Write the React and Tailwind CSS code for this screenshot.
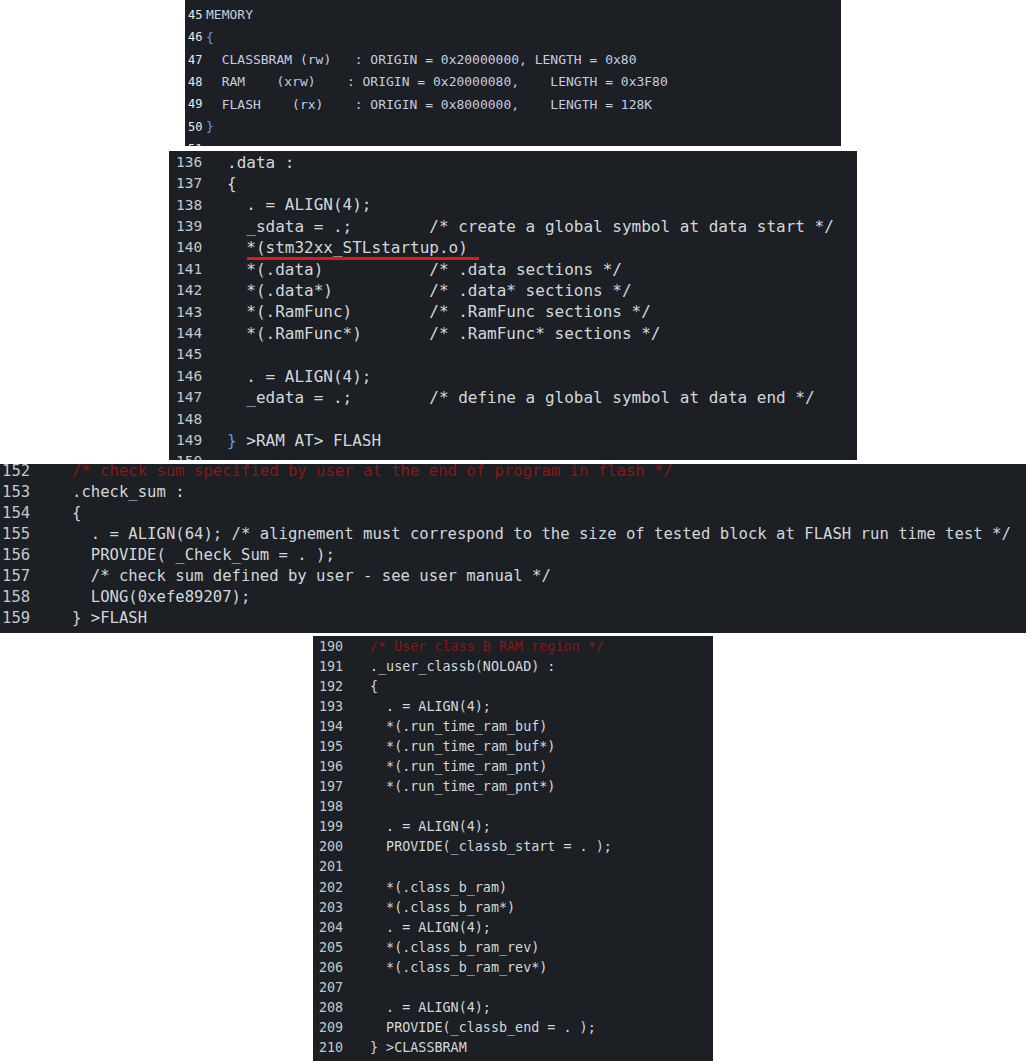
import React from "react";

const RED = "text-[#861a1a]";

// each line: [number, text, kind]  kind: "c" = red comment, "b" = blue brace
const memory = [
  ["45", "MEMORY"],
  ["46", "{", "b"],
  ["47", "  CLASSBRAM (rw)   : ORIGIN = 0x20000000, LENGTH = 0x80"],
  ["48", "  RAM    (xrw)    : ORIGIN = 0x20000080,    LENGTH = 0x3F80"],
  ["49", "  FLASH    (rx)    : ORIGIN = 0x8000000,    LENGTH = 128K"],
  ["50", "}", "b"],
  ["51", ""],
];

const dataSection = [
  ["135", "                                    /* copy of .data goes after code, typ */", "c"],
  ["136", ".data :"],
  ["137", "{"],
  ["138", "  . = ALIGN(4);"],
  ["139", "  _sdata = .;        /* create a global symbol at data start */"],
  ["140", "", "u"],
  ["141", "  *(.data)           /* .data sections */"],
  ["142", "  *(.data*)          /* .data* sections */"],
  ["143", "  *(.RamFunc)        /* .RamFunc sections */"],
  ["144", "  *(.RamFunc*)       /* .RamFunc* sections */"],
  ["145", ""],
  ["146", "  . = ALIGN(4);"],
  ["147", "  _edata = .;        /* define a global symbol at data end */"],
  ["148", ""],
  ["149", "} >RAM AT> FLASH", "rb"],
  ["150", ""],
];

const checkSum = [
  ["152", "/* check sum specified by user at the end of program in flash */", "c"],
  ["153", ".check_sum :"],
  ["154", "{"],
  ["155", "  . = ALIGN(64); /* alignement must correspond to the size of tested block at FLASH run time test */"],
  ["156", "  PROVIDE( _Check_Sum = . );"],
  ["157", "  /* check sum defined by user - see user manual */"],
  ["158", "  LONG(0xefe89207);"],
  ["159", "} >FLASH"],
];

const classB = [
  ["190", "/* User class B RAM region */", "c"],
  ["191", "._user_classb(NOLOAD) :"],
  ["192", "{"],
  ["193", "  . = ALIGN(4);"],
  ["194", "  *(.run_time_ram_buf)"],
  ["195", "  *(.run_time_ram_buf*)"],
  ["196", "  *(.run_time_ram_pnt)"],
  ["197", "  *(.run_time_ram_pnt*)"],
  ["198", ""],
  ["199", "  . = ALIGN(4);"],
  ["200", "  PROVIDE(_classb_start = . );"],
  ["201", ""],
  ["202", "  *(.class_b_ram)"],
  ["203", "  *(.class_b_ram*)"],
  ["204", "  . = ALIGN(4);"],
  ["205", "  *(.class_b_ram_rev)"],
  ["206", "  *(.class_b_ram_rev*)"],
  ["207", ""],
  ["208", "  . = ALIGN(4);"],
  ["209", "  PROVIDE(_classb_end = . );"],
  ["210", "} >CLASSBRAM"],
];

function Content({ text, kind }) {
  if (kind === "c") return <span className={RED}>{text}</span>;
  if (kind === "b") return <span className="text-[#5a9cf0]">{text}</span>;
  if (kind === "rb")
    return (
      <>
        <span className="text-[#5a9cf0]">{"}"}</span>
        {text.slice(1)}
      </>
    );
  if (kind === "u")
    return (
      <>
        {"  "}
        <span className="relative">
          *(stm32xx_STLstartup.o)
          <span className="absolute left-[1px] right-[-11px] bottom-[-3px] h-[3px] bg-[#e3161c]" />
        </span>
      </>
    );
  return <>{text}</>;
}

function Rows({ lines, rowClass, numClass, wrapClass }) {
  return (
    <div className={wrapClass}>
      {lines.map(([n, text, kind]) => (
        <div key={n} className={rowClass}>
          <span className={numClass}>{n}</span>
          <span className="whitespace-pre">
            <Content text={text} kind={kind} />
          </span>
        </div>
      ))}
    </div>
  );
}

export default function App() {
  return (
    <div className="min-h-screen w-[1030px] bg-white font-['DejaVu_Sans_Mono',monospace]">
      {/* MEMORY block */}
      <div className="ml-[185px] h-[146px] w-[656px] overflow-hidden bg-[#1c1f23] pt-[4px] text-[13px] text-[#c3cee0]">
        <Rows
          lines={memory}
          rowClass="flex h-[22.3px] items-center"
          numClass="w-[21px] shrink-0 pl-[3px] text-[12px] text-[#e8e8e8]"
        />
      </div>

      {/* .data block */}
      <div className="ml-[169px] mt-[5px] h-[309px] w-[688px] overflow-hidden bg-[#1c1f23] text-[16px] text-[#d2d7dc]">
        <Rows
          lines={dataSection}
          wrapClass="-mt-[20.4px]"
          rowClass="flex h-[21.4px] items-center"
          numClass="w-[58px] shrink-0 pl-[7px] text-[14.5px] text-[#c3c9cf]"
        />
      </div>

      {/* check_sum block */}
      <div className="mt-[4px] h-[169px] w-[1026px] overflow-hidden bg-[#1c1f23] text-[15.6px] text-[#d2d7dc]">
        <Rows
          lines={checkSum}
          wrapClass="-mt-[2.5px]"
          rowClass="flex h-[21px] items-center"
          numClass="w-[72px] shrink-0 pl-[2px] text-[#c3c9cf]"
        />
      </div>

      {/* class B block */}
      <div className="ml-[313px] mt-[3px] h-[425px] w-[400px] overflow-hidden bg-[#1c1f23] pt-[1px] text-[13.4px] text-[#d2d7dc]">
        <Rows
          lines={classB}
          rowClass="flex h-[20.05px] items-center"
          numClass="w-[57px] shrink-0 pl-[6px] text-[#c3c9cf]"
        />
      </div>
    </div>
  );
}
